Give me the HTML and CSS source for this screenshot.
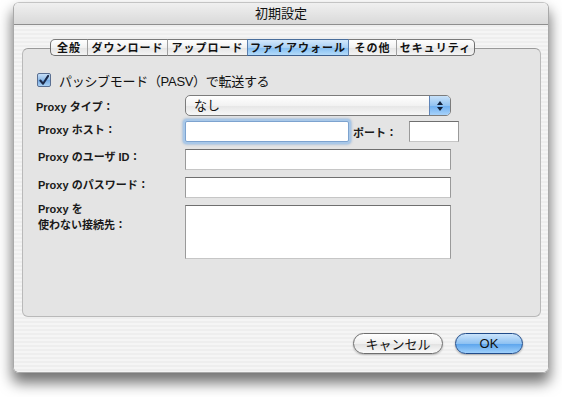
FILE: index.html
```html
<!DOCTYPE html>
<html lang="ja">
  <head>
    <meta charset="utf-8">
    <title>初期設定</title>
    <link rel="stylesheet" href="styles.css">
  </head>
  <body>
<div class="window">
  <div class="titlebar">初期設定</div>
  <div class="windowBody">
    <div class="tabs">
      <div class="tab t1">全般</div>
      <div class="tab t2">ダウンロード</div>
      <div class="tab t3">アップロード</div>
      <div class="tab t4 selected">ファイアウォール</div>
      <div class="tab t5">その他</div>
      <div class="tab t6">セキュリティ</div>
    </div>
    <div class="pane">
      <label class="checkRow">
        <span class="checkbox">
          <svg width="13" height="13" viewBox="0 0 13 13">
            <path d="M2.5 6.5 L5.5 10 L11 1.5" fill="none" stroke="#1b2a4a" stroke-width="2.2" stroke-linecap="round" stroke-linejoin="round"/>
          </svg>
        </span>
        <span>パッシブモード（PASV）で転送する</span>
      </label>

      <div class="form">
        <div class="label first">Proxy タイプ：</div>
        <div class="popup">
          <span class="popupText">なし</span>
          <span class="popupArrows">
            <svg width="8" height="12" viewBox="0 0 8 12">
              <path d="M4 1 L7 5 L1 5 Z" fill="#10203a"/>
              <path d="M4 11 L7 7 L1 7 Z" fill="#10203a"/>
            </svg>
          </span>
        </div>

        <div class="label">Proxy ホスト：</div>
        <div class="hostRow">
          <div class="field host focused"></div>
          <div class="portLabel">ポート：</div>
          <div class="field port"></div>
        </div>

        <div class="label">Proxy のユーザ ID：</div>
        <div class="field wide"></div>

        <div class="label">Proxy のパスワード：</div>
        <div class="field wide"></div>

        <div class="label multi">Proxy を<br>使わない接続先：</div>
        <div class="field wide area"></div>
      </div>
    </div>

    <div class="buttons">
      <button class="pill cancel">キャンセル</button>
      <button class="pill ok">OK</button>
    </div>
  </div>
</div>
  </body>
</html>
```

FILE: styles.css
```css
* {
  margin: 0px;
  padding: 0px;
  box-sizing: border-box;
  font-family: 'Liberation Sans', 'Noto Sans CJK JP', sans-serif;
}
body {
  background-color: white;
  width: 562px;
  height: 397px;
  overflow: hidden;
}
.window {
  margin-top: 2px;
  margin-left: 13px;
  width: 536px;
  height: 371px;
  border-radius: 6px;
  box-shadow: 0px 9px 14px 1px rgba(0, 0, 0, 0.55);
  overflow: hidden;
  display: flex;
  flex-direction: column;
  border: 1px solid #a9a9a9;
  border-top-color: #c4c4c4;
}
.titlebar {
  height: 22px;
  flex: none;
  text-align: center;
  font-size: 13px;
  line-height: 21px;
  color: #111;
  background: linear-gradient(#f0f0f0, #d9d9d9);
  border-bottom: 1px solid #8e8e8e;
}
.windowBody {
  flex: 1;
  background: repeating-linear-gradient(#eeeeee 0px, #eeeeee 2px, #f5f5f5 2px, #f5f5f5 4px);
  padding-top: 14px;
  padding-left: 8px;
  display: flex;
  flex-direction: column;
}
.tabs {
  display: flex;
  margin-left: 28px;
  height: 17px;
  position: relative;
  z-index: 1;
}
.tab {
  height: 17px;
  font-size: 11px;
  font-weight: bold;
  line-height: 16px;
  text-align: center;
  color: #111;
  background: linear-gradient(#ffffff, #f1f1f1 50%, #e4e4e4 51%, #f4f4f4);
  border-top: 1px solid #7b7b7b;
  border-bottom: 1px solid #6f6f6f;
  border-left: 1px solid #a0a0a0;
  letter-spacing: 1px;
}
.t1 { width: 37px; border-left: 1px solid #6f6f6f; border-radius: 5px 0px 0px 5px; }
.t2 { width: 80px; }
.t3 { width: 80px; }
.t4 { width: 101px; }
.t5 { width: 48px; }
.t6 { width: 79px; border-right: 1px solid #6f6f6f; border-radius: 0px 5px 5px 0px; }
.tab.selected {
  background: linear-gradient(#d3e8fb, #a9d0f5 50%, #82bdf1 51%, #b4dbfa);
  border-top-color: #4b6f9c;
  border-bottom-color: #3d5f8c;
  border-left-color: #5b7fae;
}
.tab.selected + .tab {
  border-left-color: #5b7fae;
}
.pane {
  margin-top: -8px;
  width: 519px;
  height: 269px;
  border: 1px solid #b9b9b9;
  border-top-color: #9a9a9a;
  border-radius: 6px;
  background-color: #e4e4e4;
  padding-top: 23px;
  padding-left: 14px;
}
.checkRow {
  display: flex;
  align-items: center;
  gap: 8px;
  font-size: 13px;
  color: #111;
  height: 16px;
}
.checkRow span:last-child {
  letter-spacing: -0.3px;
}
.checkbox {
  width: 14px;
  height: 14px;
  border: 1px solid #5a6f92;
  border-radius: 2px;
  background: linear-gradient(#c6def6, #8fbbe8 50%, #74a9e3 51%, #a8d0f4);
  display: flex;
  align-items: center;
  justify-content: center;
}
.form {
  display: grid;
  grid-template-columns: 149px auto;
  margin-top: 7px;
  margin-left: -1px;
}
.label {
  font-size: 11px;
  font-weight: bold;
  color: #1a1a1a;
  padding-left: 2px;
  display: flex;
  align-items: center;
}
.label.first {
  padding-left: 0px;
}
.label.multi {
  align-items: flex-start;
  padding-top: 3px;
  line-height: 16px;
}
.popup {
  width: 266px;
  height: 21px;
  border: 1px solid #7c7c7c;
  border-radius: 5px;
  background: linear-gradient(#ffffff, #f2f2f2 50%, #e6e6e6 51%, #f7f7f7);
  display: flex;
  overflow: hidden;
}
.popupText {
  flex: 1;
  font-size: 13px;
  line-height: 19px;
  padding-left: 8px;
  color: #111;
}
.popupArrows {
  width: 21px;
  border-left: 1px solid #5f84b7;
  background: linear-gradient(#c7e1f9, #93c3f1 50%, #6daef0 51%, #a7d2fa);
  display: flex;
  align-items: center;
  justify-content: center;
}
.hostRow {
  display: flex;
  align-items: center;
  margin-top: 5px;
}
.field {
  height: 21px;
  background-color: white;
  border: 1px solid #9a9a9a;
  border-top-color: #6f6f6f;
  border-bottom-color: #c6c6c6;
}
.host {
  width: 164px;
  height: 21px;
}
.focused {
  border: 1px solid #7da3cf;
  border-radius: 2px;
  box-shadow: 0px 0px 0px 2px #a9c8e8, 0px 0px 2px 3px rgba(130, 170, 215, 0.5);
}
.portLabel {
  font-size: 11px;
  font-weight: bold;
  color: #1a1a1a;
  width: 60px;
  padding-left: 4px;
}
.port {
  width: 50px;
}
.wide {
  width: 266px;
  margin-top: 7px;
}
.area {
  height: 54px;
}
.buttons {
  display: flex;
  justify-content: flex-end;
  gap: 12px;
  margin-top: 16px;
  padding-right: 25px;
}
.pill {
  height: 21px;
  border-radius: 11px;
  font-size: 13px;
  color: #111;
  cursor: pointer;
}
.cancel {
  width: 90px;
  border: 1px solid #6e6e6e;
  background: linear-gradient(#ffffff, #f0f0f0 50%, #e0e0e0 51%, #fbfbfb);
  box-shadow: 0px 1px 2px rgba(0, 0, 0, 0.25);
}
.ok {
  width: 68px;
  border: 1px solid #214c8a;
  background: linear-gradient(#cbe4fb, #8fc2f2 50%, #5aa3ec 51%, #9fd0fb);
  box-shadow: 0px 1px 2px rgba(0, 0, 0, 0.3);
}
```
